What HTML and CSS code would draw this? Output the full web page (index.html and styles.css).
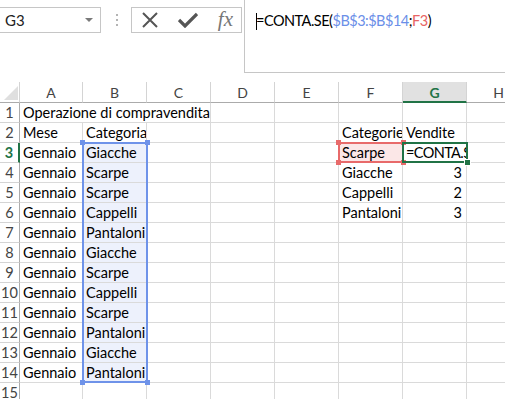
FILE: index.html
```html
<!DOCTYPE html>
<html lang="it">
<head>
  <meta charset="UTF-8">
  <title>CONTA.SE</title>
  <link rel="stylesheet" href="styles.css">
</head>
<body>
  <div class="topbar">
    <div class="namebox"><span>G3</span><span class="arrow"></span></div>
    <svg class="grip" width="2" height="12" viewBox="0 0 2 12"><rect y="0" width="2" height="2" fill="#b4b4b4"/><rect y="5" width="2" height="2" fill="#b4b4b4"/><rect y="10" width="2" height="2" fill="#b4b4b4"/></svg>
    <div class="buttons">
      <svg width="18" height="16" viewBox="0 0 18 16"><path d="M2 1 L16 15 M16 1 L2 15" stroke="#555" stroke-width="2" fill="none"/></svg>
      <svg width="20" height="16" viewBox="0 0 20 16"><path d="M1 8 L7 14 L19 2" stroke="#555" stroke-width="3.2" fill="none"/></svg>
      <span class="fx">fx</span>
    </div>
    <div class="formula">
      <span class="caret"></span>=CONTA.SE(<span class="ref-b">$B$3:$B$14</span>;<span class="ref-f">F3</span>)
    </div>
  </div>

  <div class="sheet">
    <div class="corner"><span class="tri"></span></div><div class="h">A</div><div class="h">B</div><div class="h">C</div><div class="h">D</div><div class="h">E</div><div class="h">F</div><div class="h on">G</div><div class="h">H</div>

    <div class="r">1</div><div class="c title">Operazione di compravendita</div><div class="c"></div><div class="c"></div><div class="c"></div><div class="c"></div><div class="c"></div>
    <div class="r">2</div><div class="c">Mese</div><div class="c">Categoria</div><div class="c"></div><div class="c"></div><div class="c"></div><div class="c">Categorie</div><div class="c">Vendite</div><div class="c"></div>
    <div class="r on">3</div><div class="c">Gennaio</div><div class="c sel">Giacche</div><div class="c"></div><div class="c"></div><div class="c"></div><div class="c pick">Scarpe</div><div class="c edit">=CONTA.SE(</div><div class="c"></div>
    <div class="r">4</div><div class="c">Gennaio</div><div class="c sel">Scarpe</div><div class="c"></div><div class="c"></div><div class="c"></div><div class="c">Giacche</div><div class="c num">3</div><div class="c"></div>
    <div class="r">5</div><div class="c">Gennaio</div><div class="c sel">Scarpe</div><div class="c"></div><div class="c"></div><div class="c"></div><div class="c">Cappelli</div><div class="c num">2</div><div class="c"></div>
    <div class="r">6</div><div class="c">Gennaio</div><div class="c sel">Cappelli</div><div class="c"></div><div class="c"></div><div class="c"></div><div class="c">Pantaloni</div><div class="c num">3</div><div class="c"></div>
    <div class="r">7</div><div class="c">Gennaio</div><div class="c sel">Pantaloni</div><div class="c"></div><div class="c"></div><div class="c"></div><div class="c"></div><div class="c"></div><div class="c"></div>
    <div class="r">8</div><div class="c">Gennaio</div><div class="c sel">Giacche</div><div class="c"></div><div class="c"></div><div class="c"></div><div class="c"></div><div class="c"></div><div class="c"></div>
    <div class="r">9</div><div class="c">Gennaio</div><div class="c sel">Scarpe</div><div class="c"></div><div class="c"></div><div class="c"></div><div class="c"></div><div class="c"></div><div class="c"></div>
    <div class="r">10</div><div class="c">Gennaio</div><div class="c sel">Cappelli</div><div class="c"></div><div class="c"></div><div class="c"></div><div class="c"></div><div class="c"></div><div class="c"></div>
    <div class="r">11</div><div class="c">Gennaio</div><div class="c sel">Scarpe</div><div class="c"></div><div class="c"></div><div class="c"></div><div class="c"></div><div class="c"></div><div class="c"></div>
    <div class="r">12</div><div class="c">Gennaio</div><div class="c sel">Pantaloni</div><div class="c"></div><div class="c"></div><div class="c"></div><div class="c"></div><div class="c"></div><div class="c"></div>
    <div class="r">13</div><div class="c">Gennaio</div><div class="c sel">Giacche</div><div class="c"></div><div class="c"></div><div class="c"></div><div class="c"></div><div class="c"></div><div class="c"></div>
    <div class="r">14</div><div class="c">Gennaio</div><div class="c sel">Pantaloni</div><div class="c"></div><div class="c"></div><div class="c"></div><div class="c"></div><div class="c"></div><div class="c"></div>
    <div class="r">15</div><div class="c"></div><div class="c"></div><div class="c"></div><div class="c"></div><div class="c"></div><div class="c"></div><div class="c"></div><div class="c"></div>

    <!-- range highlights drawn over the cells, on a matching grid -->
    <div class="marks">
      <div class="range range-b"><i class="hd tl"></i><i class="hd tr"></i><i class="hd bl"></i><i class="hd br"></i></div>
      <div class="range range-f"><i class="hd tl"></i><i class="hd tr"></i><i class="hd bl"></i><i class="hd br"></i></div>
      <div class="range range-g"><i class="hd br"></i></div>
    </div>
  </div>
</body>
</html>
```

FILE: styles.css
```css
body { margin: 0; width: 505px; height: 399px; overflow: hidden; background: #fff; color: #000; font-family: Lato, "Liberation Sans", sans-serif; }

.topbar { display: flex; align-items: flex-start; height: 82px; }
.namebox { box-sizing: border-box; margin-top: 7px; width: 101px; height: 26px; border: 1px solid #c6c6c6; border-left: none; display: flex; align-items: center; justify-content: space-between; padding: 0 7px 0 5px; font-size: 15px; color: #222; }
.arrow { width: 0; height: 0; border-left: 4px solid transparent; border-right: 4px solid transparent; border-top: 4px solid #7a7a7a; }
.grip { margin: 14px 13px 0 15px; }
.buttons { box-sizing: border-box; margin-top: 7px; width: 111px; height: 26px; border: 1px solid #c6c6c6; display: flex; align-items: center; justify-content: space-between; padding: 0 8px 0 9px; }
.fx { font-family: "Liberation Serif", serif; font-style: italic; font-size: 21px; color: #777; line-height: 20px; padding-bottom: 2px; }
.formula { box-sizing: border-box; flex: 1; margin: -1px 0 0 2px; height: 74px; border: 1px solid #c6c6c6; border-right: none; padding: 12px 11px; font-size: 14.5px; letter-spacing: -0.5px; line-height: 18px; white-space: nowrap; position: relative; }
.caret { position: absolute; left: 11px; top: 13px; width: 1px; height: 17px; background: #000; }
.ref-b { color: #6b8fe8; }
.ref-f { color: #e86464; }

.sheet, .marks { display: grid; grid-template-columns: 20px 63px repeat(7, 64px); grid-template-rows: 21px; grid-auto-rows: 20px; }
.sheet { position: relative; }
.marks { position: absolute; top: 0; left: 0; right: 0; bottom: 0; pointer-events: none; }
.sheet > div { box-sizing: border-box; }
.corner { border-bottom: 1px solid #ababab; border-right: 1px solid #d4d4d4; display: flex; align-items: flex-end; justify-content: flex-end; padding: 0 1px 2px 0; }
.tri { width: 0; height: 0; border-left: 14px solid transparent; border-bottom: 14px solid #dfdfdf; }
.h { border-bottom: 1px solid #ababab; border-right: 1px solid #d4d4d4; text-align: center; font-size: 14px; line-height: 22px; color: #444; }
.h.on { background: #e1e1e1; border-bottom: 2px solid #217346; color: #217346; font-weight: bold; }
.r { border-right: 1px solid #ababab; border-bottom: 1px solid #d4d4d4; text-align: center; font-size: 14.5px; line-height: 20px; color: #444; }
.r.on { color: #217346; font-weight: bold; border-right: 2px solid #217346; }
.c { border-right: 1px solid #dadada; border-bottom: 1px solid #dadada; font-size: 14.5px; line-height: 20px; padding: 0 2px 0 3px; white-space: nowrap; overflow: hidden; }
.c.title { grid-column: span 3; }
.c.num { text-align: right; padding-right: 4px; }
.c.sel { background: #edf1fc; }
.c.pick { background: #fbe7e7; }
.c.edit { letter-spacing: -0.6px; padding-left: 3px; }

.range { position: relative; box-sizing: border-box; margin: -1px -1px 0 -1px; border: 2px solid; }
.range-b { grid-column: 3; grid-row: 4 / 16; border-color: #6f93e9; }
.range-f { grid-column: 7; grid-row: 4; border-color: #e86a6a; }
.range-g { grid-column: 8; grid-row: 4; border-color: #217346; }
.hd { position: absolute; width: 5px; height: 5px; }
.range-b .hd { background: #6f93e9; }
.range-f .hd { background: #e86a6a; }
.range-g .hd { background: #217346; border: 1px solid #fff; right: -5px; bottom: -5px; }
.tl { left: -4px; top: -4px; }
.tr { right: -4px; top: -4px; }
.bl { left: -4px; bottom: -4px; }
.br { right: -4px; bottom: -4px; }
```
